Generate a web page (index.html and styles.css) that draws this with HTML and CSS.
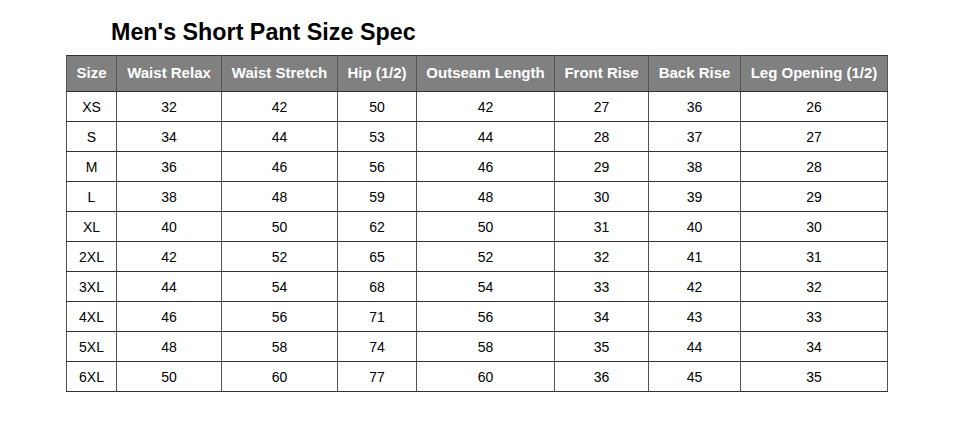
FILE: index.html
```html
<!DOCTYPE html>
<html>
<head>
<meta charset="utf-8">
<link rel="stylesheet" href="styles.css">
</head>
<body>
<div class="page">
  <h1 class="title">Men's Short Pant Size Spec</h1>
  <table class="spec">
    <colgroup>
      <col class="c1"><col class="c2"><col class="c3"><col class="c4"><col class="c5"><col class="c6"><col class="c7"><col class="c8">
    </colgroup>
    <thead>
      <tr><th>Size</th><th>Waist Relax</th><th>Waist Stretch</th><th>Hip (1/2)</th><th>Outseam Length</th><th>Front Rise</th><th>Back Rise</th><th>Leg Opening (1/2)</th></tr>
    </thead>
    <tbody>
      <tr><td>XS</td><td>32</td><td>42</td><td>50</td><td>42</td><td>27</td><td>36</td><td>26</td></tr>
      <tr><td>S</td><td>34</td><td>44</td><td>53</td><td>44</td><td>28</td><td>37</td><td>27</td></tr>
      <tr><td>M</td><td>36</td><td>46</td><td>56</td><td>46</td><td>29</td><td>38</td><td>28</td></tr>
      <tr><td>L</td><td>38</td><td>48</td><td>59</td><td>48</td><td>30</td><td>39</td><td>29</td></tr>
      <tr><td>XL</td><td>40</td><td>50</td><td>62</td><td>50</td><td>31</td><td>40</td><td>30</td></tr>
      <tr><td>2XL</td><td>42</td><td>52</td><td>65</td><td>52</td><td>32</td><td>41</td><td>31</td></tr>
      <tr><td>3XL</td><td>44</td><td>54</td><td>68</td><td>54</td><td>33</td><td>42</td><td>32</td></tr>
      <tr><td>4XL</td><td>46</td><td>56</td><td>71</td><td>56</td><td>34</td><td>43</td><td>33</td></tr>
      <tr><td>5XL</td><td>48</td><td>58</td><td>74</td><td>58</td><td>35</td><td>44</td><td>34</td></tr>
      <tr><td>6XL</td><td>50</td><td>60</td><td>77</td><td>60</td><td>36</td><td>45</td><td>35</td></tr>
    </tbody>
  </table>
</div>
</body>
</html>
```

FILE: styles.css
```css
html, body {
  margin: 0;
  padding: 0;
  background: #ffffff;
}
.page {
  padding: 19px 0 0 66px;
  font-family: "Liberation Sans", Arial, sans-serif;
}
.title {
  margin: 0 0 9px 45px;
  font-size: 23.3px;
  line-height: 27px;
  font-weight: bold;
  color: #000;
}
.spec {
  border-collapse: collapse;
  table-layout: fixed;
  width: 821px;
  font-size: 14px;
}
.c1 { width: 50px; }
.c2 { width: 105px; }
.c3 { width: 116px; }
.c4 { width: 79px; }
.c5 { width: 138px; }
.c6 { width: 94px; }
.c7 { width: 92px; }
.c8 { width: 147px; }
.spec th, .spec td {
  border-style: solid;
  border-width: 1px;
  border-color: #333 #555;
  text-align: center;
  padding: 0;
  white-space: nowrap;
}
.spec th {
  background: #808080;
  color: #fff;
  font-weight: bold;
  font-size: 15px;
  height: 33px;
  padding-bottom: 2px;
}
.spec td {
  color: #000;
  height: 29px;
}
```
